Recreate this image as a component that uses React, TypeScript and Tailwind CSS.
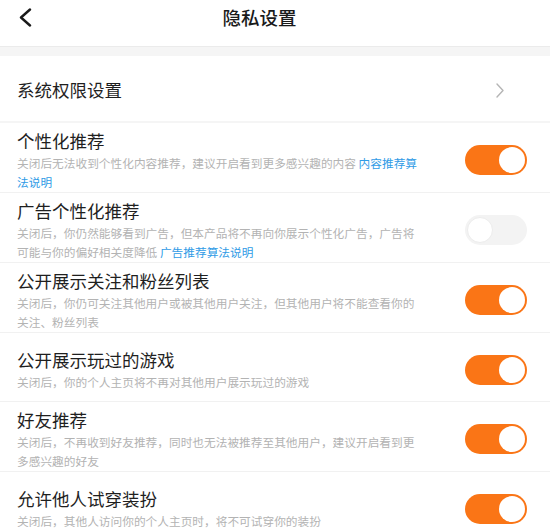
import { ReactNode } from 'react';

interface PrivacyItem {
  title: string;
  lines: ReactNode[];
  on: boolean;
}

const Link = ({ children }: { children: ReactNode }) => (
  <span className="text-[#2f9be6]">{children}</span>
);

const items: PrivacyItem[] = [
  {
    title: '个性化推荐',
    lines: [
      <>关闭后无法收到个性化内容推荐，建议开启看到更多感兴趣的内容 <Link>内容推荐算</Link></>,
      <Link>法说明</Link>,
    ],
    on: true,
  },
  {
    title: '广告个性化推荐',
    lines: [
      '关闭后，你仍然能够看到广告，但本产品将不再向你展示个性化广告，广告将',
      <>可能与你的偏好相关度降低 <Link>广告推荐算法说明</Link></>,
    ],
    on: false,
  },
  {
    title: '公开展示关注和粉丝列表',
    lines: ['关闭后，你仍可关注其他用户或被其他用户关注，但其他用户将不能查看你的', '关注、粉丝列表'],
    on: true,
  },
  {
    title: '公开展示玩过的游戏',
    lines: ['关闭后，你的个人主页将不再对其他用户展示玩过的游戏'],
    on: true,
  },
  {
    title: '好友推荐',
    lines: ['关闭后，不再收到好友推荐，同时也无法被推荐至其他用户，建议开启看到更', '多感兴趣的好友'],
    on: true,
  },
  {
    title: '允许他人试穿装扮',
    lines: ['关闭后，其他人访问你的个人主页时，将不可试穿你的装扮'],
    on: true,
  },
];

function Toggle({ on }: { on: boolean }) {
  return (
    <div
      className={`w-[62px] h-[30px] rounded-full flex items-center px-[2px] flex-shrink-0 ${
        on ? 'bg-[#fa7516] justify-end' : 'bg-[#f3f3f3] justify-start'
      }`}
    >
      <div
        className={`w-[26px] h-[26px] rounded-full bg-white ${on ? '' : 'border border-[#ececec]'}`}
      />
    </div>
  );
}

export default function App() {
  return (
    <div
      className="w-[550px] h-[528px] bg-white overflow-hidden"
      style={{ fontFamily: '"Noto Sans CJK SC", "Noto Sans", sans-serif' }}
    >
      {/* Header */}
      <div className="h-[47px] flex items-center pb-[11px] border-b border-[#ebebeb]">
        <div className="pl-[18px] w-[14px] flex-shrink-0 box-content">
          <svg width="14" height="19" viewBox="0 0 14 19" fill="none">
            <path d="M12 1.5L3 9.5l9 8" stroke="#1a1a1a" strokeWidth="2.4" strokeLinecap="round" strokeLinejoin="round" />
          </svg>
        </div>
        <div className="flex-1 text-center text-[18.5px] font-medium text-[#1a1a1a] leading-none">
          隐私设置
        </div>
        <div className="w-[63px] flex-shrink-0" />
      </div>

      <div className="h-[9px] bg-[#f5f5f5]" />

      {/* System permissions */}
      <div className="h-[67px] flex items-center justify-between pl-[17px] pr-[46px] pt-[3px] border-b-[2px] border-[#f5f5f5]">
        <span className="text-[17.5px] text-[#1f1f1f]">系统权限设置</span>
        <svg width="8" height="15" viewBox="0 0 8 15" fill="none">
          <path d="M1 1l6 6.5L1 14" stroke="#b5b5b5" strokeWidth="1.4" strokeLinecap="round" strokeLinejoin="round" />
        </svg>
      </div>

      {/* Toggles */}
      {items.map((item) => (
        <div
          key={item.title}
          className="min-h-[69px] flex items-center justify-between pl-[17px] pr-[23px] pt-[6px] pb-[1px] border-b border-[#f1f1f1]"
        >
          <div className="flex flex-col">
            <span className="text-[17.5px] leading-[24px] text-[#1f1f1f]">{item.title}</span>
            {item.lines.map((line, i) => (
              <span key={i} className="text-[11.7px] leading-[19px] text-[#b3b3b3] whitespace-nowrap">
                {line}
              </span>
            ))}
          </div>
          <Toggle on={item.on} />
        </div>
      ))}
    </div>
  );
}
